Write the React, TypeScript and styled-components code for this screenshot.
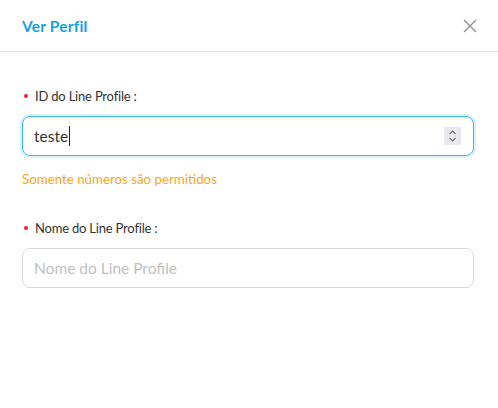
import styled, { createGlobalStyle } from "styled-components";

const Global = createGlobalStyle`
  body {
    margin: 0;
    background: #ffffff;
    font-family: "Lato", "Open Sans", sans-serif;
  }
`;

const Modal = styled.div`
  width: 498px;
  height: 408px;
  background: #ffffff;
  display: flex;
  flex-direction: column;
`;

const Header = styled.div`
  height: 52px;
  display: flex;
  align-items: center;
  justify-content: space-between;
  padding: 0 21px 0 22px;
  border-bottom: 1px solid #e6e6e6;
  box-sizing: border-box;
`;

const Title = styled.div`
  color: #169fe0;
  font-weight: 700;
  font-size: 15.5px;
  letter-spacing: 0.2px;
`;

const Close = styled.button`
  border: none;
  background: none;
  padding: 0;
  width: 14px;
  height: 14px;
  display: flex;
  cursor: pointer;
`;

const Body = styled.div`
  padding: 34px 24px 0 22px;
  display: flex;
  flex-direction: column;
`;

const Field = styled.div<{ $gap?: number }>`
  display: flex;
  flex-direction: column;
  margin-bottom: ${(p) => p.$gap ?? 0}px;
`;

const Label = styled.label`
  display: flex;
  align-items: center;
  font-size: 13px;
  letter-spacing: -0.2px;
  color: #333333;
  height: 20px;
  margin-bottom: 10px;

  &::before {
    content: "";
    width: 4px;
    height: 4px;
    border-radius: 50%;
    background: #f5222d;
    margin: 0 7px 0 2px;
  }
`;

const InputBox = styled.div<{ $focus?: boolean }>`
  height: 40px;
  box-sizing: border-box;
  border: 1px solid ${(p) => (p.$focus ? "#3cb8f0" : "#d9d9d9")};
  box-shadow: ${(p) => (p.$focus ? "0 0 0 2px rgba(60,184,240,0.2)" : "none")};
  border-radius: 8px;
  display: flex;
  align-items: center;
  padding: 0 12px 0 11px;
  font-size: 15.5px;
  color: #333333;
`;

const Value = styled.span`
  flex: 1;
  display: flex;
  align-items: center;
`;

const Caret = styled.span`
  width: 1px;
  height: 20px;
  background: #222;
  margin-left: 1px;
`;

const Placeholder = styled.span`
  color: #bfbfbf;
`;

const Spinner = styled.div`
  width: 17px;
  height: 18px;
  background: #e9e9ed;
  display: flex;
  align-items: center;
  justify-content: center;
`;

const Help = styled.div`
  color: #f7a823;
  font-size: 13.3px;
  margin-top: 15px;
`;

export default function App() {
  return (
    <>
      <Global />
      <Modal>
        <Header>
          <Title>Ver Perfil</Title>
          <Close aria-label="Fechar">
            <svg width="14" height="14" viewBox="0 0 14 14">
              <path d="M1 1L13 13M13 1L1 13" stroke="#8c8c8c" strokeWidth="1.3" />
            </svg>
          </Close>
        </Header>
        <Body>
          <Field $gap={31}>
            <Label>ID do Line Profile :</Label>
            <InputBox $focus>
              <Value>
                teste
                <Caret />
              </Value>
              <Spinner>
                <svg width="11" height="14" viewBox="0 0 11 14">
                  <path d="M2.5 5L5.5 2L8.5 5M2.5 9L5.5 12L8.5 9" stroke="#77767e" strokeWidth="1.1" fill="none" />
                </svg>
              </Spinner>
            </InputBox>
            <Help>Somente números são permitidos</Help>
          </Field>
          <Field>
            <Label>Nome do Line Profile :</Label>
            <InputBox>
              <Placeholder>Nome do Line Profile</Placeholder>
            </InputBox>
          </Field>
        </Body>
      </Modal>
    </>
  );
}
